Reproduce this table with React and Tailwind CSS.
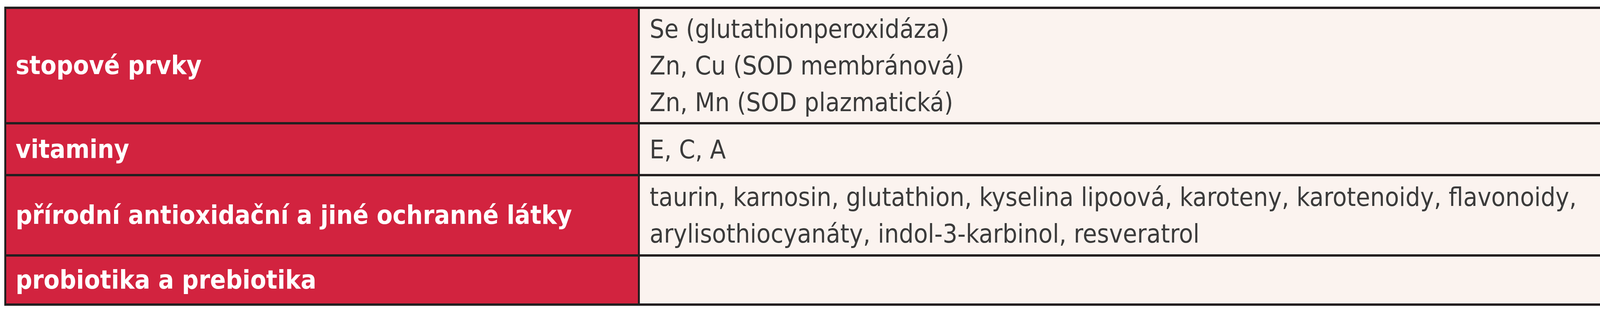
import React from 'react';

// Antioxidant table rows: label on the left, content lines on the right
const rows = [
    { label: 'stopové prvky', lines: ['Se (glutathionperoxidáza)', 'Zn, Cu (SOD membránová)', 'Zn, Mn (SOD plazmatická)'] },
    { label: 'vitaminy', lines: ['E, C, A'] },
    {
        label: 'přírodní antioxidační a jiné ochranné látky',
        lines: [
            'taurin, karnosin, glutathion, kyselina lipoová, karoteny, karotenoidy, flavonoidy,',
            'arylisothiocyanáty, indol-3-karbinol, resveratrol',
        ],
    },
    { label: 'probiotika a prebiotika', lines: [] },
];

const App = () => {
    return (
        <div className="w-[4166px] h-[800px] bg-white pt-[17px] pl-[11px]">
            <div
                className="w-[4126px] grid grid-cols-[1617px_1fr] grid-rows-[290px_127px_200px_120px] gap-x-[5px] gap-y-[6px] py-[6px] px-[5px] bg-[#231f20]"
                style={{ fontFamily: '"Liberation Sans Narrow", "DejaVu Sans Condensed", "Liberation Sans", sans-serif' }}
            >
                {rows.map((row) => (
                    <React.Fragment key={row.label}>
                        <div className="bg-[#d2233f] flex items-center pl-[24px] text-white font-bold text-[66px] leading-[94px]">
                            {row.label}
                        </div>
                        <div className="bg-[#fbf3ef] flex flex-col justify-center pl-[25px] pt-[2px] text-[#3b3b3b] text-[66px] leading-[94px]">
                            {row.lines.map((line) => (
                                <div key={line}>{line}</div>
                            ))}
                        </div>
                    </React.Fragment>
                ))}
            </div>
        </div>
    );
};

export default App;
